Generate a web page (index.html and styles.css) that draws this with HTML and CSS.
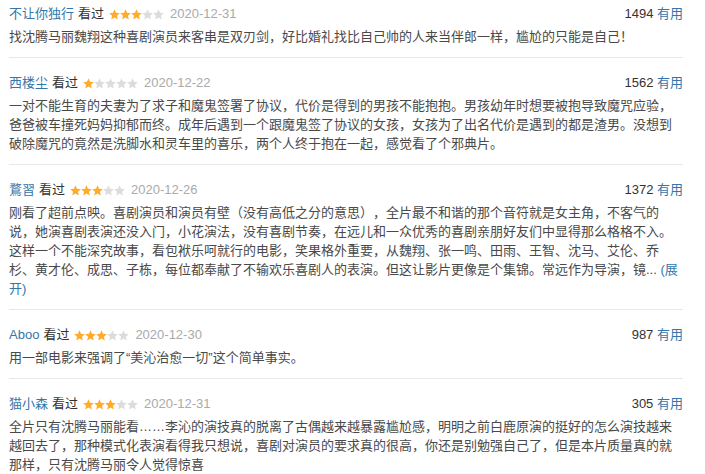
FILE: index.html
```html
<!DOCTYPE html>
<html lang="zh-CN">
<head>
<meta charset="utf-8">
<title>短评</title>
<link rel="stylesheet" href="styles.css">
</head>
<body>
<svg class="defs" width="0" height="0" aria-hidden="true">
  <symbol id="star" viewBox="0 0 11 11">
    <polygon points="5.5,0.3 7.03,3.8 10.83,4.17 7.97,6.7 8.79,10.43 5.5,8.5 2.21,10.43 3.03,6.7 0.17,4.17 3.97,3.8"/>
  </symbol>
</svg>
<div class="comments">
  <div class="comment comment--first">
    <div class="info">
      <a class="user">不让你独行</a><span class="watched">看过</span>
      <svg class="stars" width="55" height="11" viewBox="0 0 55 11"><use href="#star" x="0" width="11" height="11" class="on"/><use href="#star" x="11" width="11" height="11" class="on"/><use href="#star" x="22" width="11" height="11" class="on"/><use href="#star" x="33" width="11" height="11" class="off"/><use href="#star" x="44" width="11" height="11" class="off"/></svg>
      <span class="time">2020-12-31</span>
      <span class="votes"><span class="count">1494</span> <a class="useful">有用</a></span>
    </div>
    <p class="content">找沈腾马丽魏翔这种喜剧演员来客串是双刃剑，好比婚礼找比自己帅的人来当伴郎一样，尴尬的只能是自己！</p>
  </div>
  <div class="comment">
    <div class="info">
      <a class="user">西楼尘</a><span class="watched">看过</span>
      <svg class="stars" width="55" height="11" viewBox="0 0 55 11"><use href="#star" x="0" width="11" height="11" class="on"/><use href="#star" x="11" width="11" height="11" class="off"/><use href="#star" x="22" width="11" height="11" class="off"/><use href="#star" x="33" width="11" height="11" class="off"/><use href="#star" x="44" width="11" height="11" class="off"/></svg>
      <span class="time">2020-12-22</span>
      <span class="votes"><span class="count">1562</span> <a class="useful">有用</a></span>
    </div>
    <p class="content">一对不能生育的夫妻为了求子和魔鬼签署了协议，代价是得到的男孩不能抱抱。男孩幼年时想要被抱导致魔咒应验，爸爸被车撞死妈妈抑郁而终。成年后遇到一个跟魔鬼签了协议的女孩，女孩为了出名代价是遇到的都是渣男。没想到破除魔咒的竟然是洗脚水和灵车里的喜乐，两个人终于抱在一起，感觉看了个邪典片。</p>
  </div>
  <div class="comment">
    <div class="info">
      <a class="user">鶩習</a><span class="watched">看过</span>
      <svg class="stars" width="55" height="11" viewBox="0 0 55 11"><use href="#star" x="0" width="11" height="11" class="on"/><use href="#star" x="11" width="11" height="11" class="on"/><use href="#star" x="22" width="11" height="11" class="on"/><use href="#star" x="33" width="11" height="11" class="off"/><use href="#star" x="44" width="11" height="11" class="off"/></svg>
      <span class="time">2020-12-26</span>
      <span class="votes"><span class="count">1372</span> <a class="useful">有用</a></span>
    </div>
    <p class="content">刚看了超前点映。喜剧演员和演员有壁（没有高低之分的意思），全片最不和谐的那个音符就是女主角，不客气的说，她演喜剧表演还没入门，小花演法，没有喜剧节奏，在远儿和一众优秀的喜剧亲朋好友们中显得那么格格不入。这样一个不能深究故事，看包袱乐呵就行的电影，笑果格外重要，从魏翔、张一鸣、田雨、王智、沈马、艾伦、乔杉、黄才伦、成思、子栋，每位都奉献了不输欢乐喜剧人的表演。但这让影片更像是个集锦。常远作为导演，镜... <a class="unfold">(展开)</a></p>
  </div>
  <div class="comment">
    <div class="info">
      <a class="user">Aboo</a><span class="watched">看过</span>
      <svg class="stars" width="55" height="11" viewBox="0 0 55 11"><use href="#star" x="0" width="11" height="11" class="on"/><use href="#star" x="11" width="11" height="11" class="on"/><use href="#star" x="22" width="11" height="11" class="on"/><use href="#star" x="33" width="11" height="11" class="off"/><use href="#star" x="44" width="11" height="11" class="off"/></svg>
      <span class="time">2020-12-30</span>
      <span class="votes"><span class="count">987</span> <a class="useful">有用</a></span>
    </div>
    <p class="content">用一部电影来强调了“美沁治愈一切”这个简单事实。</p>
  </div>
  <div class="comment comment--last">
    <div class="info">
      <a class="user">猫小森</a><span class="watched">看过</span>
      <svg class="stars" width="55" height="11" viewBox="0 0 55 11"><use href="#star" x="0" width="11" height="11" class="on"/><use href="#star" x="11" width="11" height="11" class="on"/><use href="#star" x="22" width="11" height="11" class="on"/><use href="#star" x="33" width="11" height="11" class="off"/><use href="#star" x="44" width="11" height="11" class="off"/></svg>
      <span class="time">2020-12-31</span>
      <span class="votes"><span class="count">305</span> <a class="useful">有用</a></span>
    </div>
    <p class="content">全片只有沈腾马丽能看……李沁的演技真的脱离了古偶越来越暴露尴尬感，明明之前白鹿原演的挺好的怎么演技越来越回去了，那种模式化表演看得我只想说，喜剧对演员的要求真的很高，你还是别勉强自己了，但是本片质量真的就那样，只有沈腾马丽令人觉得惊喜</p>
  </div>
</div>
</body>
</html>
```

FILE: styles.css
```css
html, body {
  margin: 0;
  padding: 0;
  background: #fff;
}

body {
  font-family: "Liberation Sans", Arial, "Noto Sans CJK SC", sans-serif;
  font-size: 13px;
  color: #494949;
  overflow: hidden;
  text-spacing-trim: space-all;
}

.defs {
  position: absolute;
  width: 0;
  height: 0;
}

.comments {
  width: 674px;
  padding-left: 9px;
}

.comment {
  padding: 15px 0 11px;
  border-bottom: 1px solid #e8e8e8;
}

.comment--first {
  padding-top: 4px;
}

.comment--last {
  border-bottom: none;
}

.info {
  display: flex;
  align-items: center;
  height: 20px;
  line-height: 20px;
  white-space: nowrap;
}

.user {
  color: #3377aa;
}

.watched {
  color: #333;
  margin-left: 4px;
}

.stars {
  display: block;
  flex: none;
  margin: 0 6px 0 5px;
}

.stars .on {
  fill: #ffac2d;
}

.stars .off {
  fill: #dcdcdc;
}

.time {
  color: #aaa;
}

.votes {
  margin-left: auto;
  color: #333;
}

.useful {
  color: #3377aa;
}

.content {
  margin: 3px 0 0;
  line-height: 19px;
  color: #494949;
  text-spacing-trim: space-all;
}

.unfold {
  color: #3377aa;
}
```
